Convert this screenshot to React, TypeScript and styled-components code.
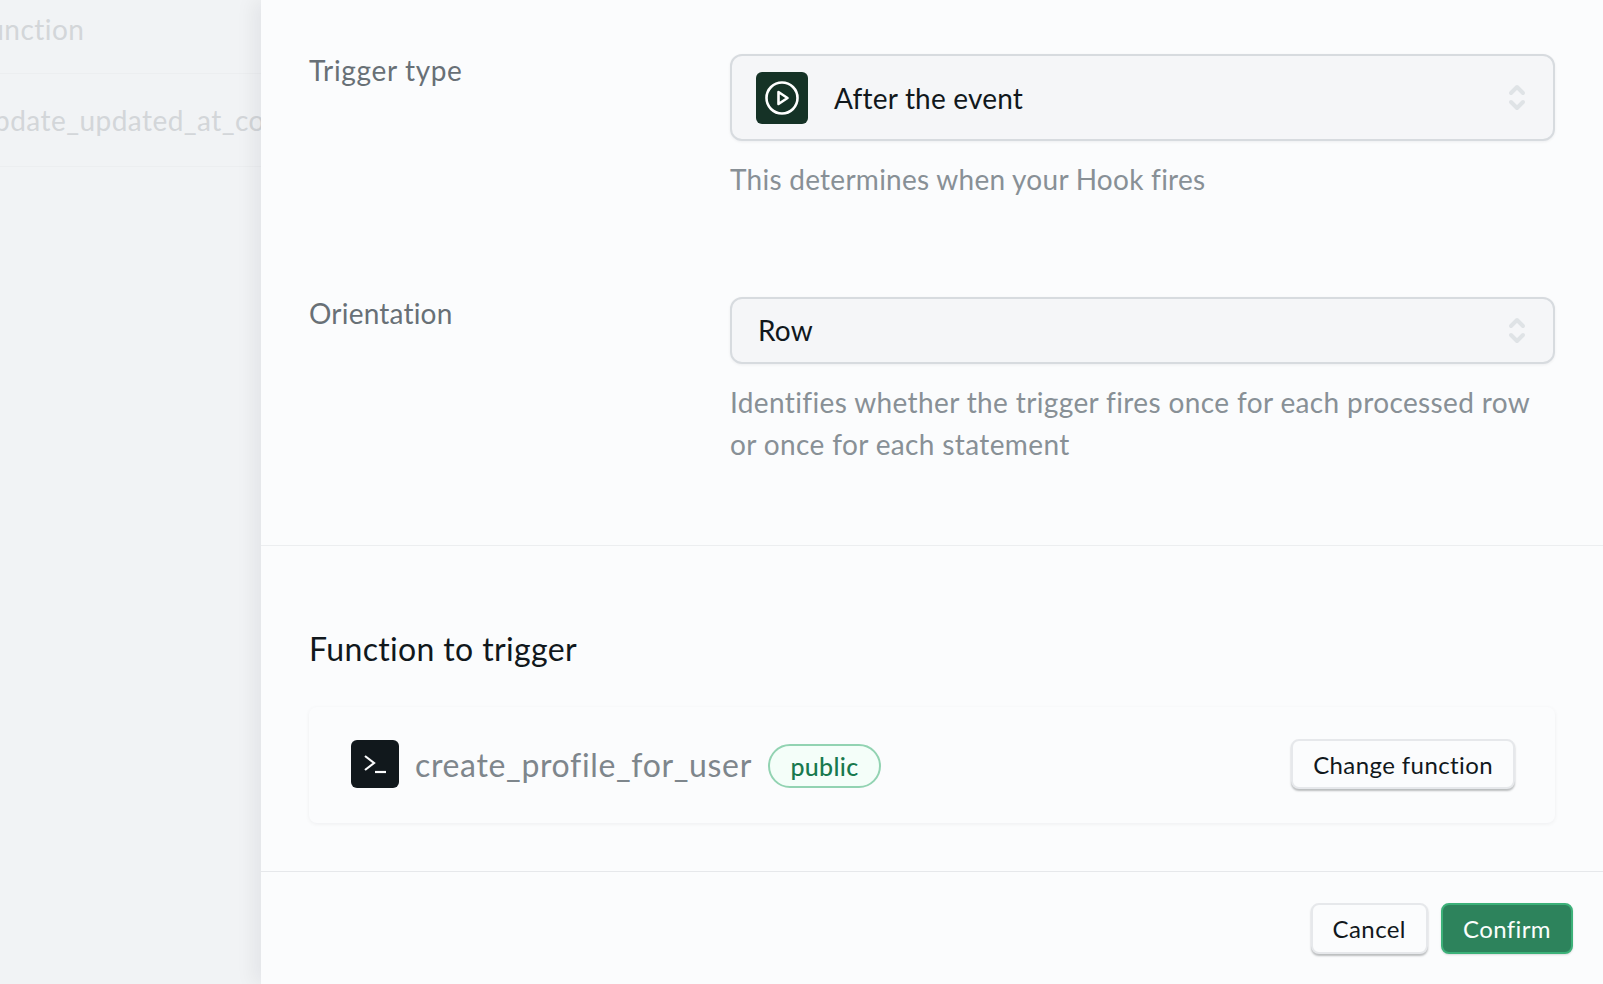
import React from "react";
import styled, { createGlobalStyle } from "styled-components";

const GlobalStyle = createGlobalStyle`
  html, body {
    margin: 0;
    padding: 0;
    height: 100%;
    overflow: hidden;
    background: #f1f3f5;
    font-family: "Lato", "Liberation Sans", sans-serif;
    font-variant-ligatures: none;
  }
  * {
    box-sizing: border-box;
  }
`;

const Page = styled.div`
  display: flex;
  width: 1603px;
  height: 984px;
  overflow: hidden;
`;

const Backdrop = styled.div`
  width: 261px;
  flex-shrink: 0;
  overflow: hidden;
  background: #f1f3f5;
`;

const BackdropRow = styled.div<{ $height: number; $shift: number; $lift?: number }>`
  height: ${(p) => p.$height}px;
  display: flex;
  align-items: center;
  margin-left: ${(p) => p.$shift}px;
  padding-bottom: ${(p) => p.$lift ?? 0}px;
  width: 700px;
  border-bottom: 1px solid #eceef0;
  color: #d3d6d9;
  font-size: 28px;
  letter-spacing: 0.45px;
  white-space: nowrap;
`;

const Panel = styled.main`
  flex: 1;
  display: flex;
  flex-direction: column;
  background: #fbfcfd;
  box-shadow: -8px 0 18px rgba(17, 24, 28, 0.06);
  z-index: 1;
`;

const FormSection = styled.section`
  display: flex;
  flex-direction: column;
  gap: 97px;
  padding: 54px 48px 80px;
  border-bottom: 1px solid #eceef0;
`;

const FormRow = styled.div`
  display: grid;
  grid-template-columns: 421px 825px;
`;

const Label = styled.label<{ $spacing: number }>`
  color: #687076;
  font-size: 28px;
  line-height: 32px;
  letter-spacing: ${(p) => p.$spacing}px;
`;

const Field = styled.div`
  display: flex;
  flex-direction: column;
`;

const Select = styled.div<{ $tall?: boolean }>`
  display: flex;
  align-items: center;
  gap: 26px;
  height: ${(p) => (p.$tall ? 87 : 67)}px;
  padding: 0 ${(p) => (p.$tall ? 24 : 26)}px ${(p) => (p.$tall ? 0 : 1)}px;
  background: #f5f6f8;
  border: 2px solid #d7dbdf;
  border-radius: 12px;
  box-shadow: 0 1px 3px rgba(17, 24, 28, 0.06);
  color: #11181c;
  font-size: 28px;
  letter-spacing: 0.2px;
`;

const SelectIcon = styled.span`
  width: 52px;
  height: 52px;
  display: flex;
  align-items: center;
  justify-content: center;
  flex-shrink: 0;
  background: #153226;
  border-radius: 6px;
`;

const Chevrons = styled.svg<{ $inset: number }>`
  margin-left: auto;
  margin-right: ${(p) => p.$inset}px;
  width: 18px;
  height: 31px;
  fill: none;
  stroke: #dfe3e6;
  stroke-width: 4;
  stroke-linecap: round;
  stroke-linejoin: round;
`;

const Hint = styled.p<{ $spacing: number }>`
  margin: 17px 0 0;
  color: #889096;
  font-size: 28px;
  line-height: 42px;
  letter-spacing: ${(p) => p.$spacing}px;
`;

const FunctionSection = styled.section`
  flex: 1;
  padding: 85px 48px 0;
  border-bottom: 1px solid #e6e8eb;
`;

const SectionTitle = styled.h3`
  margin: 0 0 40px;
  color: #11181c;
  font-size: 32px;
  font-weight: 400;
  line-height: 36px;
  letter-spacing: 0.35px;
`;

const FunctionCard = styled.div`
  display: flex;
  align-items: center;
  gap: 16px;
  height: 116px;
  padding: 0 40px 2px 42px;
  background: #fbfcfd;
  border-radius: 8px;
  box-shadow: 0 1px 4px rgba(17, 24, 28, 0.06);
`;

const TerminalIcon = styled.span`
  width: 48px;
  height: 48px;
  display: flex;
  align-items: center;
  justify-content: center;
  flex-shrink: 0;
  background: #11181c;
  border-radius: 6px;
`;

const FunctionName = styled.span`
  color: #7e868c;
  font-size: 32px;
  letter-spacing: 0.65px;
`;

const SchemaPill = styled.span`
  display: flex;
  align-items: center;
  justify-content: center;
  width: 113px;
  height: 44px;
  margin-top: 3px;
  background: #f4fef9;
  border: 2px solid #92d3b2;
  border-radius: 22px;
  color: #18794e;
  font-size: 25px;
  font-weight: 500;
  letter-spacing: 0.3px;
`;

const Button = styled.button<{ $primary?: boolean }>`
  height: 51px;
  padding: 0 20px;
  border-radius: 8px;
  border: 2px solid ${(p) => (p.$primary ? "#3cb179" : "#e6e8eb")};
  background: ${(p) => (p.$primary ? "#2d835c" : "#fbfcfd")};
  color: ${(p) => (p.$primary ? "#fbfefc" : "#11181c")};
  box-shadow: ${(p) =>
    p.$primary ? "0 1px 2px rgba(17, 24, 28, 0.15)" : "0 2px 2px rgba(17, 24, 28, 0.28)"};
  font-family: inherit;
  font-size: 24px;
  letter-spacing: 0.4px;
  font-variant-ligatures: none;
`;

const ChangeButton = styled(Button)`
  height: 50px;
  margin-left: auto;
`;

const Footer = styled.footer`
  display: flex;
  justify-content: flex-end;
  gap: 13px;
  height: 112px;
  padding: 31px 30px 0;
`;

const SelectArrows: React.FC<{ inset: number }> = ({ inset }) => (
  <Chevrons $inset={inset} viewBox="0 0 18 31">
    <path d="M3 11 L9 5 L15 11" />
    <path d="M3 20 L9 26 L15 20" />
  </Chevrons>
);

const App: React.FC = () => {
  return (
    <Page>
      <GlobalStyle />
      <Backdrop>
        <BackdropRow $height={74} $shift={-22} $lift={15}>
          function
        </BackdropRow>
        <BackdropRow $height={93} $shift={-22}>
          update_updated_at_column
        </BackdropRow>
      </Backdrop>
      <Panel>
        <FormSection>
          <FormRow>
            <Label $spacing={0.65}>Trigger type</Label>
            <Field>
              <Select $tall>
                <SelectIcon>
                  <svg width="36" height="36" viewBox="0 0 36 36" fill="none" stroke="#ffffff" strokeWidth="2.6">
                    <circle cx="18" cy="18" r="15.5" />
                    <path d="M14.5 12 L23.5 18 L14.5 24 Z" strokeLinejoin="round" />
                  </svg>
                </SelectIcon>
                After the event
                <SelectArrows inset={3} />
              </Select>
              <Hint $spacing={0.26}>This determines when your Hook fires</Hint>
            </Field>
          </FormRow>
          <FormRow>
            <Label $spacing={0.2}>Orientation</Label>
            <Field>
              <Select>
                Row
                <SelectArrows inset={1} />
              </Select>
              <Hint $spacing={0.37}>
                Identifies whether the trigger fires once for each processed row
                <br />
                or once for each statement
              </Hint>
            </Field>
          </FormRow>
        </FormSection>
        <FunctionSection>
          <SectionTitle>Function to trigger</SectionTitle>
          <FunctionCard>
            <TerminalIcon>
              <svg width="28" height="28" viewBox="0 0 28 28" fill="none" stroke="#fbfcfd" strokeWidth="2.2">
                <path d="M4 6 L13 13 L4 20" />
                <path d="M14 22 H25" />
              </svg>
            </TerminalIcon>
            <FunctionName>create_profile_for_user</FunctionName>
            <SchemaPill>public</SchemaPill>
            <ChangeButton>Change function</ChangeButton>
          </FunctionCard>
        </FunctionSection>
        <Footer>
          <Button>Cancel</Button>
          <Button $primary>Confirm</Button>
        </Footer>
      </Panel>
    </Page>
  );
};

export default App;
